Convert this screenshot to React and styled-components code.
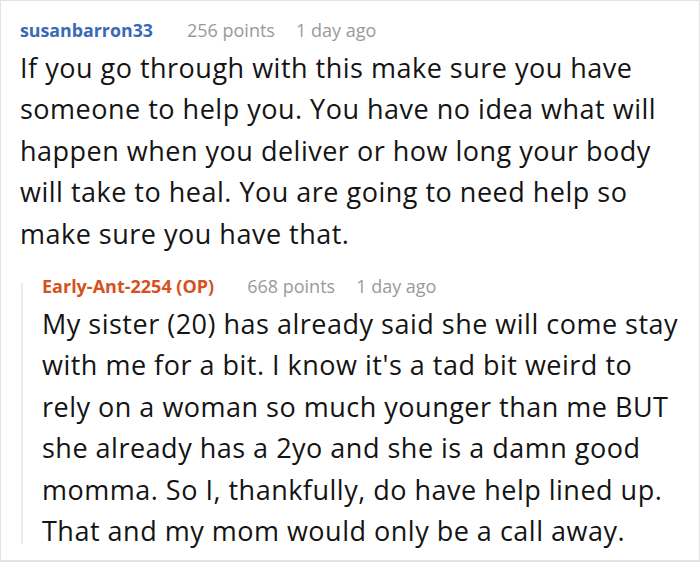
import styled, { createGlobalStyle } from 'styled-components';

const Global = createGlobalStyle`
html, body {
margin:0;
padding:0;
background:#fff;
}
`;

const Frame = styled.div`
box-sizing:border-box;
width:700px;
height:562px;
border:1px solid #e3e3e3;
border-bottom-width:2px;
padding:17px 14px 0 19px;
font-family:"Open Sans", "Noto Sans", sans-serif;
overflow:hidden;
`;

const Comment = styled.div`
display:flex;
flex-direction:column;
`;

const Meta = styled.div`
display:flex;
align-items:baseline;
gap:21px;
font-size:18px;
line-height:24px;
color:#9a9a9a;
margin-bottom:4.5px;
`;

const User = styled.span`
font-weight:700;
font-size:${p => p.op ? '18px' : '17.8px'};
color:${p => p.op ? '#d6511b' : '#3a69b6'};
margin-right:${p => p.op ? '12px' : '13px'};
`;

const Body = styled.p`
margin:0;
font-size:27px;
letter-spacing:0.5px;
line-height:41.5px;
color:#141414;
`;

const Reply = styled.div`
display:flex;
margin-top:20px;
margin-left:1px;
`;

const Thread = styled.div`
flex:none;
width:2px;
background:#ebebeb;
margin:9px 19px 8px 0;
`;

export default function App(){
    return <Frame>
        <Global />
        <Comment>
            <Meta>
                <User>susanbarron33</User>
                <span>256 points</span>
                <span>1 day ago</span>
            </Meta>
            <Body>
                If you go through with this make sure you have someone to help you. You have no idea what will happen when you deliver or how long your body will take to heal. You are going to need help so make sure you have that.
            </Body>
        </Comment>
        <Reply>
            <Thread />
            <Comment>
                <Meta>
                    <User op>Early-Ant-2254 (OP)</User>
                    <span>668 points</span>
                    <span>1 day ago</span>
                </Meta>
                <Body>
                    My sister (20) has already said she will come stay with me for a bit. I know it's a tad bit weird to rely on a woman so much younger than me BUT she already has a 2yo and she is a damn good momma. So I, thankfully, do have help lined up. That and my mom would only be a call away.
                </Body>
            </Comment>
        </Reply>
    </Frame>
}
